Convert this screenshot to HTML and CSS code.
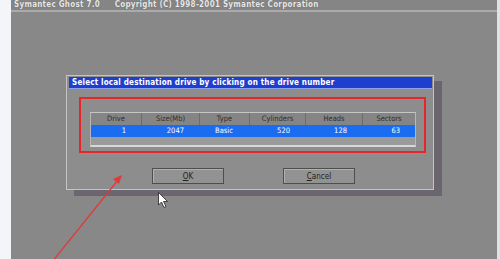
FILE: index.html
```html
<!DOCTYPE html>
<html lang="en">
<head>
    <meta charset="UTF-8">
    <title>Symantec Ghost 7.0</title>
    <link rel="stylesheet" href="styles.css">
</head>
<body>
    <div class="page">
        <div class="gutter"></div>
        <div class="screen">
            <div class="topbar">
                <span class="product">Symantec Ghost 7.0</span>
                <span class="copyright">Copyright (C) 1998-2001 Symantec Corporation</span>
            </div>
            <div class="dialog">
                <div class="dialog-title">Select local destination drive by clicking on the drive number</div>
                <div class="dialog-body">
                    <div class="highlight">
                        <div class="drive-table">
                            <div class="row head">
                                <span>Drive</span>
                                <span>Size(Mb)</span>
                                <span>Type</span>
                                <span>Cylinders</span>
                                <span>Heads</span>
                                <span>Sectors</span>
                            </div>
                            <div class="row selected">
                                <span class="num">1</span>
                                <span class="num">2047</span>
                                <span>Basic</span>
                                <span class="num">520</span>
                                <span class="num">128</span>
                                <span class="num">63</span>
                            </div>
                            <div class="empty"></div>
                        </div>
                    </div>
                    <div class="buttons">
                        <button class="btn"><u>O</u>K</button>
                        <button class="btn"><u>C</u>ancel</button>
                    </div>
                </div>
            </div>
        </div>
        <div class="edge"></div>

        <!-- annotation arrow and mouse pointer lie over the screen -->
        <svg class="overlay" width="500" height="259" viewBox="0 0 500 259">
            <line x1="52" y1="262" x2="118" y2="180" stroke="#e03a3a" stroke-width="1.3"/>
            <path d="M122 175 L113 179 L119 184 Z" fill="#e03a3a"/>
            <path d="M158.5 192.5 L158.5 205 L161.5 202 L164 207.5 L166 206.5 L163.5 201.5 L167.5 201.5 Z"
                  fill="#ffffff" stroke="#222" stroke-width="0.8"/>
        </svg>
    </div>
</body>
</html>
```

FILE: styles.css
```css
/* General */
* {
    box-sizing: border-box;
}

body {
    margin: 0;
    background: #878787;
    font-family: 'DejaVu Sans Condensed', 'DejaVu Sans', sans-serif;
    overflow: hidden;
}

.page {
    display: flex;
    width: 500px;
    height: 259px;
    position: relative;
}

.gutter {
    width: 11px;
    background: #f3f5f8;
}

.edge {
    width: 3px;
    background: #dfe2e6;
}

.screen {
    flex: 1;
    background: #888888;
}

/* Top bar */
.topbar {
    height: 12px;
    padding-left: 3px;
    border-bottom: 2px solid #ababab;
    background: #858585;
    color: #e8e8e8;
    font-size: 8px;
    font-weight: bold;
    line-height: 10px;
    letter-spacing: 0.25px;
    white-space: nowrap;
    text-shadow: 0 0 1px #555;
}

.product {
    margin-right: 12px;
}

/* Dialog */
.dialog {
    width: 368px;
    height: 115px;
    margin: 63px 0 0 55px;
    padding: 1px;
    border: 1px solid #c4c4c4;
    background: #8d8d8d;
    box-shadow: 8px 6px 0 #6b6570;
    display: flex;
    flex-direction: column;
}

.dialog-title {
    height: 12px;
    margin-left: 1px;
    padding-left: 3px;
    background: #1e3fce;
    border-bottom: 1px solid #8ea0e8;
    color: #ffffff;
    font-size: 8px;
    font-weight: bold;
    line-height: 11px;
    white-space: nowrap;
    letter-spacing: 0.2px;
}

.dialog-body {
    flex: 1;
    padding: 8px 6px 0 11px;
    display: flex;
    flex-direction: column;
}

.highlight {
    height: 56px;
    padding: 13px 8px 0 9px;
    border: 2px solid #e8262a;
}

/* Drive table */
.drive-table {
    border-top: 1px solid #c6c6c6;
    border-left: 1px solid #b8b8b8;
    border-right: 1px solid #b8b8b8;
    border-bottom: 2px solid #d8d8d8;
    background: #9a9a9a;
}

.row {
    display: grid;
    grid-template-columns: 50px 58px 50px 56px 57px 1fr;
    height: 12px;
    font-size: 7.5px;
    line-height: 12px;
}

.row span {
    text-align: center;
}

.head {
    background: #858585;
    color: #2e2e2e;
}

.head span + span {
    border-left: 1px solid #6c6c6c;
}

.selected {
    background: #1a6df0;
    color: #ffffff;
}

.selected .num {
    text-align: right;
    padding-right: 15px;
}

.empty {
    height: 8px;
}

/* Buttons */
.buttons {
    display: flex;
    gap: 59px;
    padding: 15px 0 0 73px;
}

.btn {
    width: 72px;
    height: 16px;
    padding: 0;
    border: 1px solid #4e4e4e;
    box-shadow: inset 1px 1px 0 #b0b0b0;
    background: #929292;
    color: #222222;
    font-family: 'DejaVu Sans Condensed', 'DejaVu Sans', sans-serif;
    font-size: 8px;
}

/* Overlays */
.overlay {
    position: absolute;
    left: 0;
    top: 0;
    pointer-events: none;
}
```
